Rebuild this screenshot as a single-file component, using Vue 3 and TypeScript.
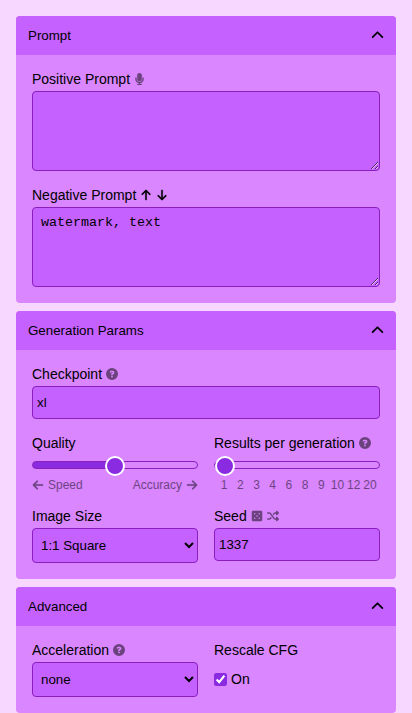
<script setup lang="ts">
import { computed, reactive, ref, type FunctionalComponent, h } from 'vue'

interface Glyph {
  box: string
  d: string
}

const glyphs: Record<string, Glyph> = {
  mic: {
    box: '0 0 384 512',
    d: 'M192 0C139 0 96 43 96 96V256c0 53 43 96 96 96s96-43 96-96V96c0-53-43-96-96-96zM64 216c0-13.3-10.7-24-24-24s-24 10.7-24 24v40c0 89.1 66.2 162.7 152 174.4V464H120c-13.3 0-24 10.7-24 24s10.7 24 24 24h72 72c13.3 0 24-10.7 24-24s-10.7-24-24-24H216V430.4c85.8-11.7 152-85.3 152-174.4V216c0-13.3-10.7-24-24-24s-24 10.7-24 24v40c0 70.7-57.3 128-128 128s-128-57.3-128-128V216z',
  },
  help: {
    box: '0 0 512 512',
    d: 'M256 512A256 256 0 1 0 256 0a256 256 0 1 0 0 512zM160 158c10-28 34-45 63-45h60c42 0 75 34 75 77c0 28-14 52-38 66L290 274c0 18-14 32-34 32c-19 0-34-14-34-32V251c0-11 6-21 15-26l44-26c4-2 7-6 7-11c0-7-5-12-12-12H223c-3 0-6 2-7 5c-6 16-22 24-37 19s-24-22-19-38zM219 361a37 37 0 1 1 74 0 37 37 0 1 1 -74 0z',
  },
  dice: {
    box: '0 0 448 512',
    d: 'M64 32C28.7 32 0 60.7 0 96V416c0 35.3 28.7 64 64 64H384c35.3 0 64-28.7 64-64V96c0-35.3-28.7-64-64-64H64zM96 160a32 32 0 1 1 64 0 32 32 0 1 1 -64 0zM288 160a32 32 0 1 1 64 0 32 32 0 1 1 -64 0zM192 256a32 32 0 1 1 64 0 32 32 0 1 1 -64 0zM96 352a32 32 0 1 1 64 0 32 32 0 1 1 -64 0zM288 352a32 32 0 1 1 64 0 32 32 0 1 1 -64 0z',
  },
  shuffle: {
    box: '0 0 512 512',
    d: 'M403.8 34.4c12-5 25.7-2.2 34.9 6.9l64 64c6 6 9.4 14.1 9.4 22.6s-3.4 16.6-9.4 22.6l-64 64c-9.2 9.2-22.9 11.9-34.9 6.9s-19.8-16.6-19.8-29.6V160H352c-10.1 0-19.6 4.7-25.6 12.8L284 229.3 244 176l31.2-41.6C293.3 110.2 321.8 96 352 96h32V64c0-12.9 7.8-24.6 19.8-29.6zM164 282.7L204 336l-31.2 41.6C154.7 401.8 126.2 416 96 416H32c-17.7 0-32-14.3-32-32s14.3-32 32-32H96c10.1 0 19.6-4.7 25.6-12.8L164 282.7zm274.6 188c-9.2 9.2-22.9 11.9-34.9 6.9s-19.8-16.6-19.8-29.6V416H352c-30.2 0-58.7-14.2-76.8-38.4L121.6 172.8c-6-8.1-15.5-12.8-25.6-12.8H32c-17.7 0-32-14.3-32-32s14.3-32 32-32H96c30.2 0 58.7 14.2 76.8 38.4L326.4 339.2c6 8.1 15.5 12.8 25.6 12.8h32V320c0-12.9 7.8-24.6 19.8-29.6s25.7-2.2 34.9 6.9l64 64c6 6 9.4 14.1 9.4 22.6s-3.4 16.6-9.4 22.6l-64 64z',
  },
  up: {
    box: '0 0 384 512',
    d: 'M214.6 41.4c-12.5-12.5-32.8-12.5-45.3 0l-160 160c-12.5 12.5-12.5 32.8 0 45.3s32.8 12.5 45.3 0L160 141.2V448c0 17.7 14.3 32 32 32s32-14.3 32-32V141.2L329.4 246.6c12.5 12.5 32.8 12.5 45.3 0s12.5-32.8 0-45.3l-160-160z',
  },
  down: {
    box: '0 0 384 512',
    d: 'M169.4 470.6c12.5 12.5 32.8 12.5 45.3 0l160-160c12.5-12.5 12.5-32.8 0-45.3s-32.8-12.5-45.3 0L224 370.8V64c0-17.7-14.3-32-32-32s-32 14.3-32 32V370.7L54.6 265.4c-12.5-12.5-32.8-12.5-45.3 0s-12.5 32.8 0 45.3l160 160z',
  },
  left: {
    box: '0 0 448 512',
    d: 'M9.4 233.4c-12.5 12.5-12.5 32.8 0 45.3l160 160c12.5 12.5 32.8 12.5 45.3 0s12.5-32.8 0-45.3L109.2 288H416c17.7 0 32-14.3 32-32s-14.3-32-32-32H109.3L214.6 118.6c12.5-12.5 12.5-32.8 0-45.3s-32.8-12.5-45.3 0l-160 160z',
  },
  right: {
    box: '0 0 448 512',
    d: 'M438.6 278.6c12.5-12.5 12.5-32.8 0-45.3l-160-160c-12.5-12.5-32.8-12.5-45.3 0s-12.5 32.8 0 45.3L338.8 224H32c-17.7 0-32 14.3-32 32s14.3 32 32 32H338.7L233.4 393.4c-12.5 12.5-12.5 32.8 0 45.3s32.8 12.5 45.3 0l160-160z',
  },
  chevron: {
    box: '0 0 512 512',
    d: 'M233.4 105.4c12.5-12.5 32.8-12.5 45.3 0l192 192c12.5 12.5 12.5 32.8 0 45.3s-32.8 12.5-45.3 0L256 173.3 86.6 342.6c-12.5 12.5-32.8 12.5-45.3 0s-12.5-32.8 0-45.3l192-192z',
  },
}

const Icon: FunctionalComponent<{ name: string }> = (props) =>
  h('svg', { viewBox: glyphs[props.name].box, fill: 'currentColor', 'aria-hidden': 'true' }, [
    h('path', { d: glyphs[props.name].d, 'fill-rule': 'evenodd' }),
  ])
Icon.props = ['name']

const open = reactive({ prompt: true, params: true, advanced: true })
const positive = ref('')
const negative = ref('watermark, text')
const checkpoint = ref('xl')
const quality = ref(50)
const counts = [1, 2, 3, 4, 6, 8, 9, 10, 12, 20]
const countIndex = ref(0)
const size = ref('1:1 Square')
const seed = ref('1337')
const acceleration = ref('none')
const rescale = ref(true)

const qualityFill = computed(() => `${quality.value}%`)
const countFill = computed(() => `${(countIndex.value / (counts.length - 1)) * 88 + 6}%`)
</script>

<template>
  <main class="page">
    <section class="panel">
      <button class="head" @click="open.prompt = !open.prompt">
        Prompt <Icon name="chevron" class="chev" :class="{ closed: !open.prompt }" />
      </button>
      <div v-if="open.prompt" class="body">
        <div class="field">
          <div class="label">Positive Prompt <Icon name="mic" class="ico narrow dim" /></div>
          <textarea v-model="positive" class="control area" spellcheck="false"></textarea>
        </div>
        <div class="field">
          <div class="label">
            Negative Prompt
            <Icon name="up" class="ico arrow" /><Icon name="down" class="ico arrow" />
          </div>
          <textarea v-model="negative" class="control area" spellcheck="false"></textarea>
        </div>
      </div>
    </section>

    <section class="panel">
      <button class="head" @click="open.params = !open.params">
        Generation Params <Icon name="chevron" class="chev" :class="{ closed: !open.params }" />
      </button>
      <div v-if="open.params" class="body">
        <div class="field">
          <div class="label">Checkpoint <Icon name="help" class="ico dim" /></div>
          <input v-model="checkpoint" class="control text" />
        </div>
        <div class="pair">
          <div class="field">
            <div class="label">Quality</div>
            <input v-model.number="quality" class="range" type="range" min="0" max="100" :style="{ '--fill': qualityFill }" />
            <div class="hints">
              <span class="hint"><Icon name="left" class="hint-ico" />Speed</span>
              <span class="hint">Accuracy<Icon name="right" class="hint-ico" /></span>
            </div>
          </div>
          <div class="field">
            <div class="label">Results per generation <Icon name="help" class="ico dim" /></div>
            <input v-model.number="countIndex" class="range" type="range" min="0" max="9" :style="{ '--fill': countFill }" />
            <div class="hints ticks">
              <span v-for="n in counts" :key="n" class="tick">{{ n }}</span>
            </div>
          </div>
        </div>
        <div class="pair">
          <div class="field">
            <div class="label">Image Size</div>
            <select v-model="size" class="control select">
              <option>1:1 Square</option>
            </select>
          </div>
          <div class="field">
            <div class="label">
              Seed <Icon name="dice" class="ico dim" /><Icon name="shuffle" class="ico dim" />
            </div>
            <input v-model="seed" class="control text" />
          </div>
        </div>
      </div>
    </section>

    <section class="panel">
      <button class="head" @click="open.advanced = !open.advanced">
        Advanced <Icon name="chevron" class="chev" :class="{ closed: !open.advanced }" />
      </button>
      <div v-if="open.advanced" class="body">
        <div class="pair">
          <div class="field">
            <div class="label">Acceleration <Icon name="help" class="ico dim" /></div>
            <select v-model="acceleration" class="control select">
              <option>none</option>
            </select>
          </div>
          <div class="field">
            <div class="label">Rescale CFG</div>
            <label class="check"><input v-model="rescale" class="box" type="checkbox" />On</label>
          </div>
        </div>
      </div>
    </section>
  </main>
</template>

<style>
body {
  background: #f7d6ff;
}
</style>

<style scoped>
.page {
  display: flex;
  flex-direction: column;
  gap: 8px;
  padding: 16px 16px 0;
  font-family: 'Liberation Sans', Arial, sans-serif;
  font-size: 14px;
  line-height: 16px;
  color: #000;
}
.panel {
  border-radius: 4px;
  overflow: hidden;
  background: #d986ff;
}
.head {
  display: flex;
  align-items: center;
  justify-content: space-between;
  width: 100%;
  height: 39px;
  padding: 0 12px;
  border: 0;
  background: #c561ff;
  color: #000;
  font: 13.333px 'Liberation Sans', Arial, sans-serif;
}
.chev {
  width: 13px;
  height: 13px;
  stroke: currentColor;
  stroke-width: 4;
}
.closed {
  transform: rotate(180deg);
}
.body {
  display: flex;
  flex-direction: column;
  gap: 16px;
  padding: 16px;
}
.pair {
  display: grid;
  grid-template-columns: 1fr 1fr;
  gap: 16px;
}
.field {
  display: flex;
  flex-direction: column;
  gap: 4px;
  min-width: 0;
}
.label {
  display: flex;
  align-items: center;
  height: 16px;
  white-space: nowrap;
}
.ico {
  width: 12px;
  height: 12px;
  margin-left: 4px;
}
.narrow {
  width: 9px;
  margin-left: 5px;
  stroke: currentColor;
  stroke-width: 12;
}
.arrow {
  stroke: currentColor;
  stroke-width: 8;
}
.dim {
  opacity: 0.5;
}
.control {
  display: block;
  box-sizing: border-box;
  width: 100%;
  margin: 0;
  border: 1px solid #8a1fbe;
  border-radius: 4px;
  background-color: #c561ff;
  color: #000;
  font: 13.333px 'Liberation Sans', Arial, sans-serif;
}
.area {
  height: 80px;
  padding: 7px 8px 8px;
  font-family: 'Liberation Mono', monospace;
}
.text {
  height: 33px;
  padding: 0 4px;
}
.select {
  height: 35px;
  padding: 0 4px;
}
.range {
  appearance: none;
  box-sizing: border-box;
  width: 100%;
  height: 8px;
  margin: 6px 0;
  border: 1px solid #8a1fbe;
  border-radius: 8px;
  background: linear-gradient(to right, #8a2be2 var(--fill), transparent var(--fill)) border-box;
}
.range::-webkit-slider-thumb {
  appearance: none;
  box-sizing: border-box;
  width: 20px;
  height: 20px;
  margin-top: 2px;
  border: 2px solid #fff;
  border-radius: 50%;
  background: #8a2be2;
}
.hints {
  display: flex;
  justify-content: space-between;
  height: 13px;
  font-size: 12px;
  line-height: 13px;
  opacity: 0.5;
}
.hint {
  display: flex;
  align-items: center;
  gap: 4px;
}
.hint-ico {
  width: 12px;
  height: 12px;
  margin-bottom: 2px;
  stroke: currentColor;
  stroke-width: 8;
}
.ticks {
  padding: 0 2px;
}
.tick {
  display: flex;
  flex: 1 1 0;
  justify-content: center;
  min-width: 0;
}
.check {
  display: flex;
  align-items: center;
  gap: 4px;
  height: 34px;
}
.box {
  width: 13px;
  height: 13px;
  margin: 0;
  accent-color: #8a2be2;
}
</style>
